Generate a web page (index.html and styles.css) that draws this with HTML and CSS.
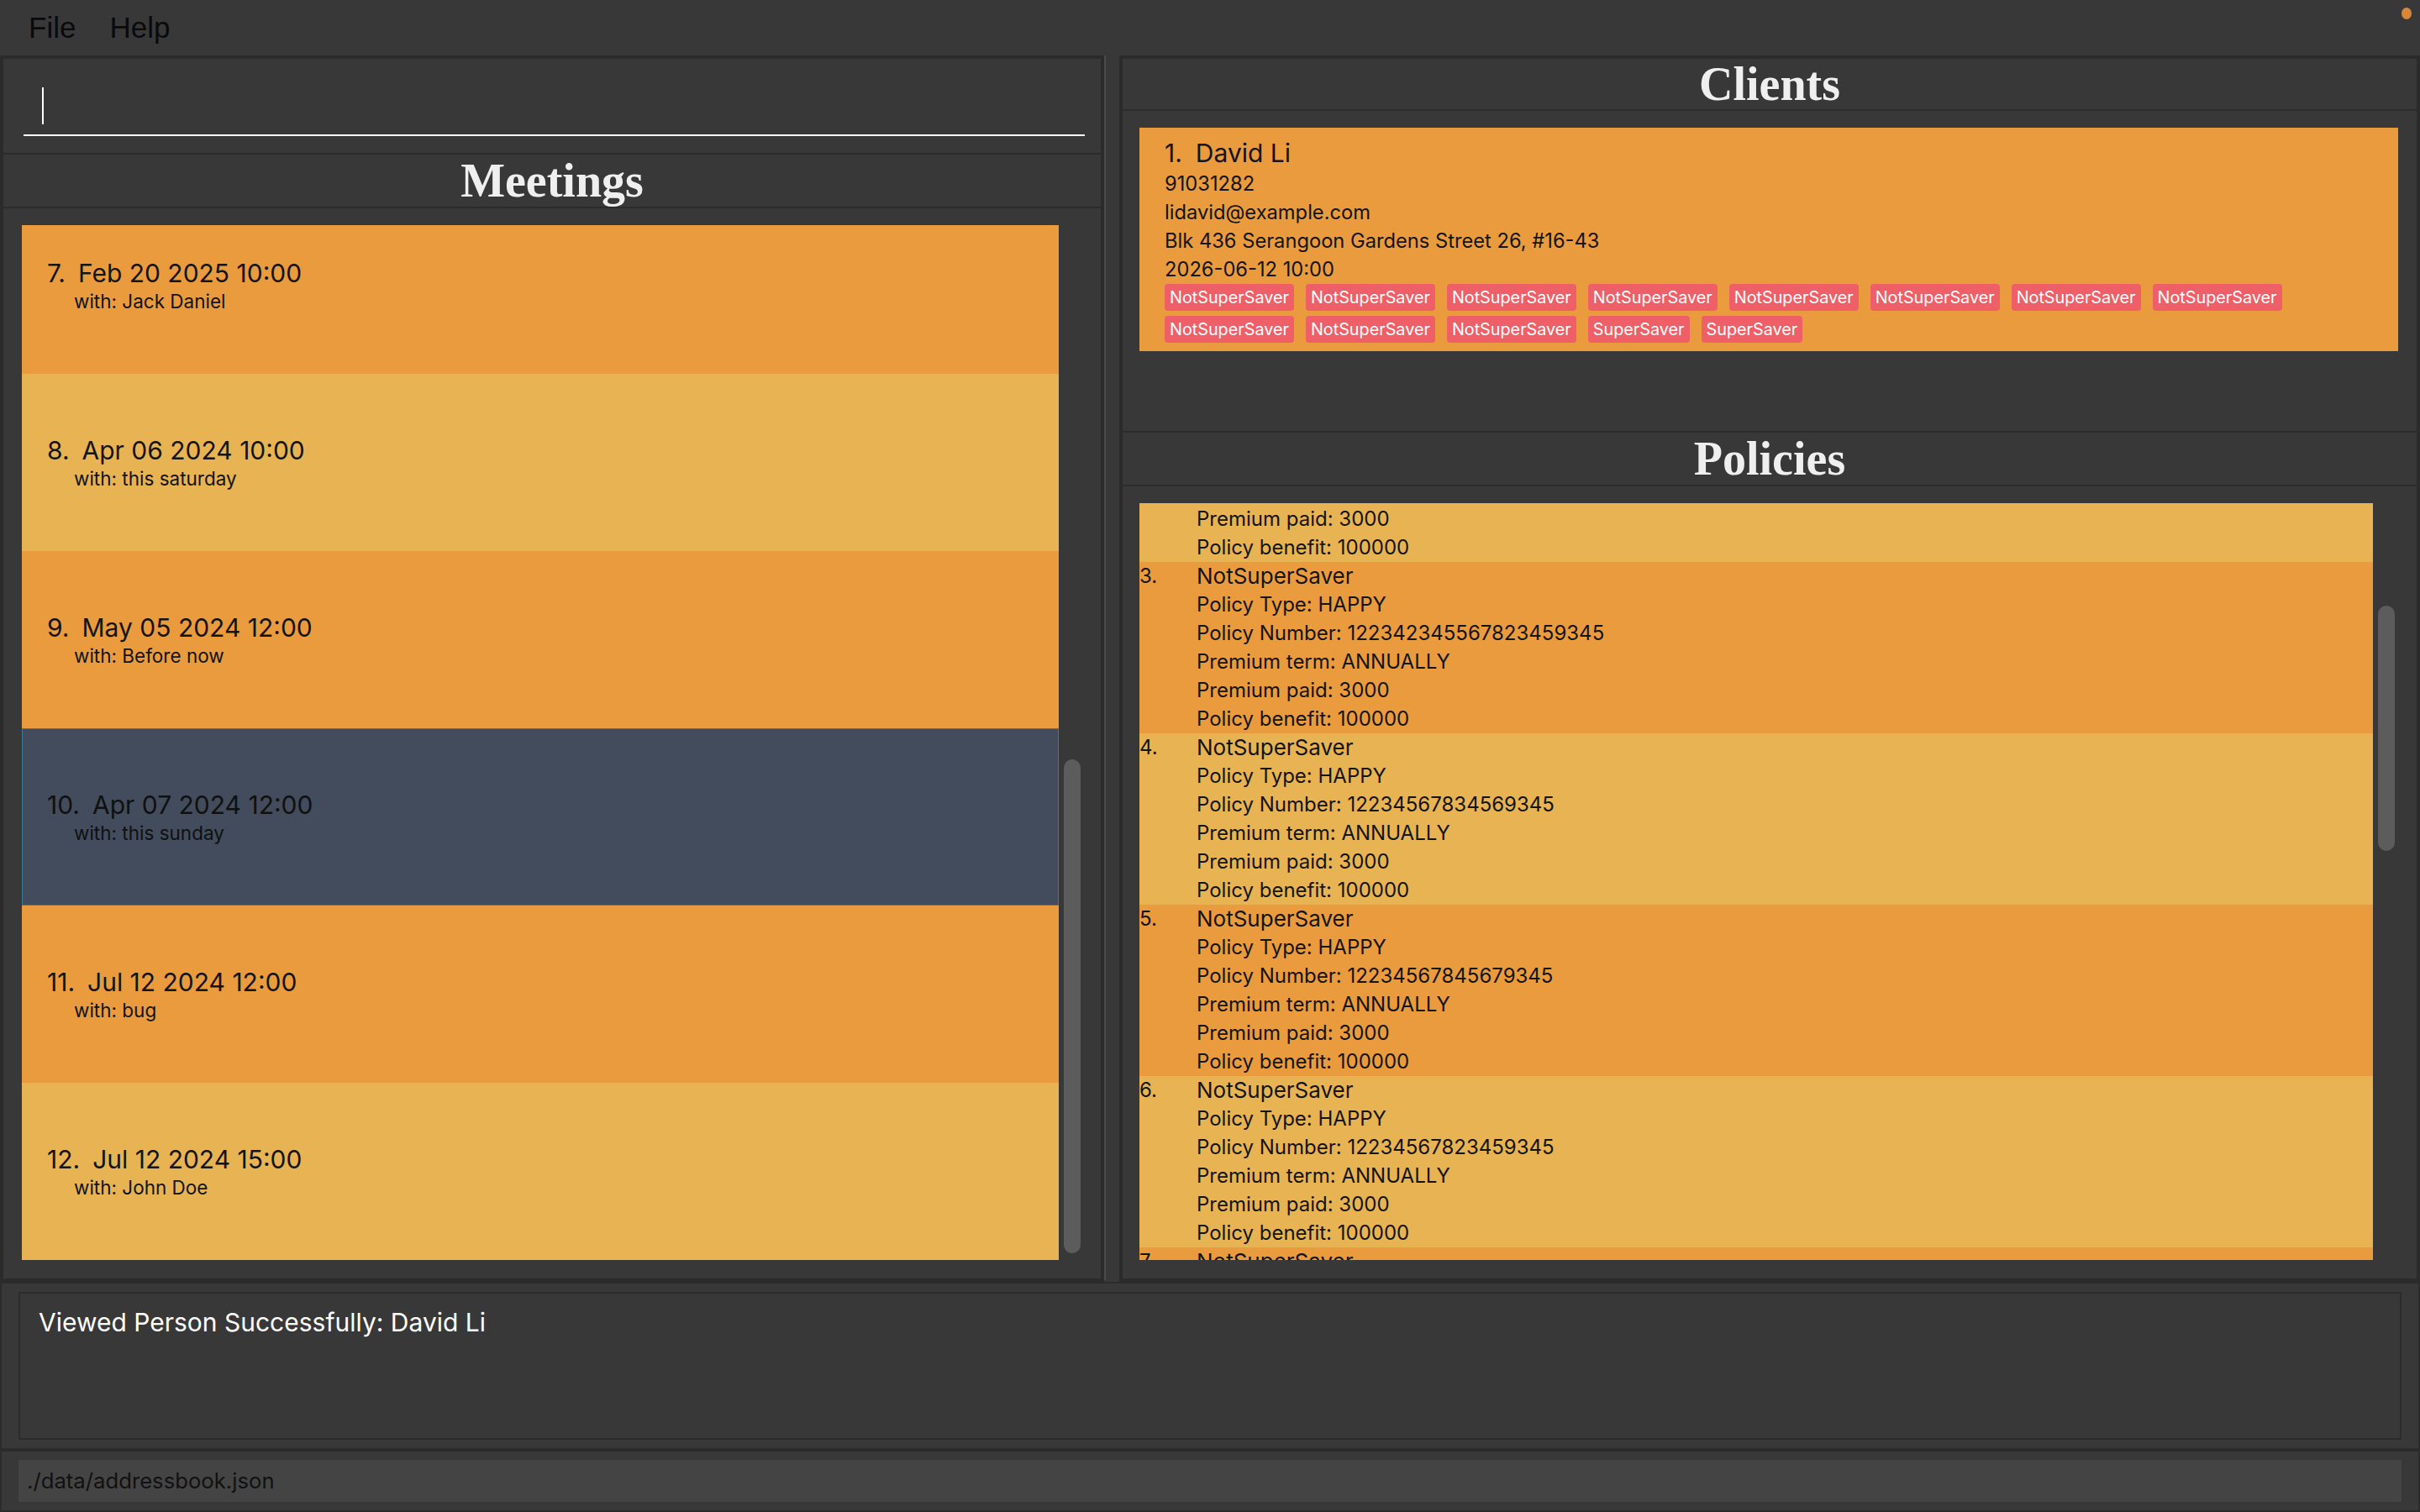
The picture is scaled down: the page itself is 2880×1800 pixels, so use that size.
FILE: index.html
```html
<!DOCTYPE html>
<html>
<head>
<meta charset="utf-8">
<title>Address Book</title>
<link rel="stylesheet" href="styles.css">
</head>
<body>
<div class="window">
  <div class="menubar">
    <span class="menu">File</span>
    <span class="menu">Help</span>
    <span class="dot"></span>
  </div>
  <div class="main">
    <div class="col left">
      <div class="box cmd">
        <div class="field"><span class="caret"></span></div>
      </div>
      <div class="box head"><h2>Meetings</h2></div>
      <div class="box listbox meet-list">
        <div class="viewport">
          <div class="meet-scroll">
            <div class="meeting orange">
              <div class="mtitle"><span>7.</span><span>Feb 20 2025 10:00</span></div>
              <div class="with">with: Jack Daniel</div>
            </div>
            <div class="meeting light">
              <div class="mtitle"><span>8.</span><span>Apr 06 2024 10:00</span></div>
              <div class="with">with: this saturday</div>
            </div>
            <div class="meeting orange">
              <div class="mtitle"><span>9.</span><span>May 05 2024 12:00</span></div>
              <div class="with">with: Before now</div>
            </div>
            <div class="meeting selected">
              <div class="mtitle"><span>10.</span><span>Apr 07 2024 12:00</span></div>
              <div class="with">with: this sunday</div>
            </div>
            <div class="meeting orange">
              <div class="mtitle"><span>11.</span><span>Jul 12 2024 12:00</span></div>
              <div class="with">with: bug</div>
            </div>
            <div class="meeting light">
              <div class="mtitle"><span>12.</span><span>Jul 12 2024 15:00</span></div>
              <div class="with">with: John Doe</div>
            </div>
          </div>
        </div>
        <div class="track"><div class="thumb meet-thumb"></div></div>
      </div>
    </div>
    <div class="divider"></div>
    <div class="col right">
      <div class="box head"><h2>Clients</h2></div>
      <div class="box client-list">
        <div class="client-card">
          <div class="cname"><span>1.</span><span>David Li</span></div>
          <div class="cline">91031282</div>
          <div class="cline">lidavid@example.com</div>
          <div class="cline">Blk 436 Serangoon Gardens Street 26, #16-43</div>
          <div class="cline">2026-06-12 10:00</div>
          <div class="tags">
            <span class="tag">NotSuperSaver</span>
            <span class="tag">NotSuperSaver</span>
            <span class="tag">NotSuperSaver</span>
            <span class="tag">NotSuperSaver</span>
            <span class="tag">NotSuperSaver</span>
            <span class="tag">NotSuperSaver</span>
            <span class="tag">NotSuperSaver</span>
            <span class="tag">NotSuperSaver</span>
            <span class="tag">NotSuperSaver</span>
            <span class="tag">NotSuperSaver</span>
            <span class="tag">NotSuperSaver</span>
            <span class="tag">SuperSaver</span>
            <span class="tag">SuperSaver</span>
          </div>
        </div>
      </div>
      <div class="box head"><h2>Policies</h2></div>
      <div class="box listbox pol-list">
        <div class="viewport">
          <div class="pol-scroll">
            <div class="policy orange">
              <div class="pnum">1.</div>
              <div class="pbody">
                <div class="ptitle">SuperSaver</div>
                <div class="pl">Policy Type: HAPPY</div>
                <div class="pl">Policy Number: 12234567823459345</div>
                <div class="pl">Premium term: ANNUALLY</div>
                <div class="pl">Premium paid: 3000</div>
                <div class="pl">Policy benefit: 100000</div>
              </div>
            </div>
            <div class="policy light">
              <div class="pnum">2.</div>
              <div class="pbody">
                <div class="ptitle">SuperSaver</div>
                <div class="pl">Policy Type: HAPPY</div>
                <div class="pl">Policy Number: 12234567823459346</div>
                <div class="pl">Premium term: ANNUALLY</div>
                <div class="pl">Premium paid: 3000</div>
                <div class="pl">Policy benefit: 100000</div>
              </div>
            </div>
            <div class="policy orange">
              <div class="pnum">3.</div>
              <div class="pbody">
                <div class="ptitle">NotSuperSaver</div>
                <div class="pl">Policy Type: HAPPY</div>
                <div class="pl">Policy Number: 122342345567823459345</div>
                <div class="pl">Premium term: ANNUALLY</div>
                <div class="pl">Premium paid: 3000</div>
                <div class="pl">Policy benefit: 100000</div>
              </div>
            </div>
            <div class="policy light">
              <div class="pnum">4.</div>
              <div class="pbody">
                <div class="ptitle">NotSuperSaver</div>
                <div class="pl">Policy Type: HAPPY</div>
                <div class="pl">Policy Number: 12234567834569345</div>
                <div class="pl">Premium term: ANNUALLY</div>
                <div class="pl">Premium paid: 3000</div>
                <div class="pl">Policy benefit: 100000</div>
              </div>
            </div>
            <div class="policy orange">
              <div class="pnum">5.</div>
              <div class="pbody">
                <div class="ptitle">NotSuperSaver</div>
                <div class="pl">Policy Type: HAPPY</div>
                <div class="pl">Policy Number: 12234567845679345</div>
                <div class="pl">Premium term: ANNUALLY</div>
                <div class="pl">Premium paid: 3000</div>
                <div class="pl">Policy benefit: 100000</div>
              </div>
            </div>
            <div class="policy light">
              <div class="pnum">6.</div>
              <div class="pbody">
                <div class="ptitle">NotSuperSaver</div>
                <div class="pl">Policy Type: HAPPY</div>
                <div class="pl">Policy Number: 12234567823459345</div>
                <div class="pl">Premium term: ANNUALLY</div>
                <div class="pl">Premium paid: 3000</div>
                <div class="pl">Policy benefit: 100000</div>
              </div>
            </div>
            <div class="policy orange">
              <div class="pnum">7.</div>
              <div class="pbody">
                <div class="ptitle">NotSuperSaver</div>
                <div class="pl">Policy Type: HAPPY</div>
                <div class="pl">Policy Number: 12234567823459345</div>
                <div class="pl">Premium term: ANNUALLY</div>
                <div class="pl">Premium paid: 3000</div>
                <div class="pl">Policy benefit: 100000</div>
              </div>
            </div>
          </div>
        </div>
        <div class="track"><div class="thumb pol-thumb"></div></div>
      </div>
    </div>
  </div>
  <div class="result">
    <div class="result-box">Viewed Person Successfully: David Li</div>
  </div>
  <div class="status">
    <div class="status-box">./data/addressbook.json</div>
  </div>
</div>
</body>
</html>
```

FILE: styles.css
```css
* { box-sizing: border-box; }
html, body { margin: 0; padding: 0; }
body {
  width: 2880px;
  height: 1800px;
  background: #383838;
  font-family: Inter, "Noto Sans", sans-serif;
  overflow: hidden;
}
.window { display: flex; flex-direction: column; height: 1800px; }

/* menu bar */
.menubar {
  height: 66px;
  display: flex;
  align-items: flex-start;
  gap: 40px;
  padding-left: 34px;
  font-family: "Liberation Sans", Arial, sans-serif;
  font-size: 35px;
  line-height: 66px;
  color: #0a0a0a;
}
.dot {
  margin-left: auto;
  margin-top: 9px;
  margin-right: 10px;
  width: 12px;
  height: 14px;
  border-radius: 50%;
  background: #d8873a;
}

/* main split */
.main { display: flex; height: 1460px; }
.col {
  display: flex;
  flex-direction: column;
  border: 2px solid #2b2b2b;
}
.left { width: 1314px; }
.right { width: 1548px; }
.divider { width: 18px; border-left: 2px solid #4a4a4a; height: 1458px; }

.box { border: 2px solid #2b2b2b; border-top-width: 0; }
.box:first-child { border-top-width: 2px; }

/* command box */
.cmd { height: 116px; padding: 0 19px 0 24px; }
.field {
  height: 92px;
  border-bottom: 2px solid #ffffff;
  display: flex;
  align-items: flex-end;
  padding-bottom: 12px;
  padding-left: 22px;
}
.caret { width: 2px; height: 44px; background: #ffffff; }

/* headers */
.head {
  height: 64px;
  display: flex;
  align-items: center;
  justify-content: center;
}
.head h2 {
  margin: 0;
  font-family: "Liberation Serif", "Times New Roman", serif;
  font-weight: bold;
  font-size: 56px;
  line-height: 1;
  color: #efefef;
}

/* generic list */
.listbox { display: flex; gap: 6px; }
.viewport { flex: 1; overflow: hidden; }
.track { width: 20px; }
.thumb { background: #5c5c5c; border-radius: 10px; }

.orange { background: #e99b3d; }
.light { background: #e7b353; }

/* meetings */
.meet-list { height: 1276px; padding: 20px 24px 22px 22px; }
.meet-scroll { margin-top: -34px; }
.meet-thumb { margin-top: 636px; height: 588px; }
.meeting {
  height: 211px;
  display: flex;
  flex-direction: column;
  justify-content: center;
  padding-left: 30px;
  color: #141414;
}
.meeting.selected {
  background: #424c5d;
  border: 1px solid #3b7b9a;
  padding-left: 29px;
  color: #101010;
}
.mtitle { display: flex; gap: 15px; font-size: 30px; line-height: 38px; }
.with { font-size: 22.5px; line-height: 30px; padding-left: 32px; }

/* clients */
.client-list { height: 383px; padding: 20px 22px 0 20px; }
.client-card {
  background: #e99b3d;
  padding: 10px 30px 10px 30px;
  color: #141414;
}
.cname { display: flex; gap: 16px; font-size: 30px; line-height: 40px; }
.cline { font-size: 23.7px; line-height: 34px; }
.tags {
  display: flex;
  flex-wrap: wrap;
  gap: 6px 14px;
  max-width: 1350px;
}
.tag {
  height: 32px;
  padding: 0 6px;
  border-radius: 4px;
  background: #ef5f67;
  color: #ffffff;
  font-size: 19.8px;
  line-height: 32px;
}

/* policies */
.pol-list { height: 945px; padding: 20px 26px 22px 20px; }
.pol-scroll { margin-top: -338px; }
.pol-thumb { margin-top: 122px; height: 292px; }
.policy { display: flex; color: #141414; }
.pnum { width: 68px; font-size: 24px; line-height: 34px; }
.ptitle { font-size: 26px; line-height: 34px; }
.pl { font-size: 24px; line-height: 34px; }

/* result & status */
.result {
  height: 200px;
  border: 2px solid #2b2b2b;
  padding: 10px 20px;
}
.result-box {
  height: 176px;
  border: 2px solid #2b2b2b;
  padding: 15px 22px;
  color: #ffffff;
  font-size: 30px;
  line-height: 38px;
}
.status {
  height: 74px;
  border: 2px solid #2b2b2b;
  padding: 10px 20px;
}
.status-box {
  height: 50px;
  background: #444444;
  padding-left: 10px;
  color: #111111;
  font-size: 25.7px;
  line-height: 50px;
}
```
